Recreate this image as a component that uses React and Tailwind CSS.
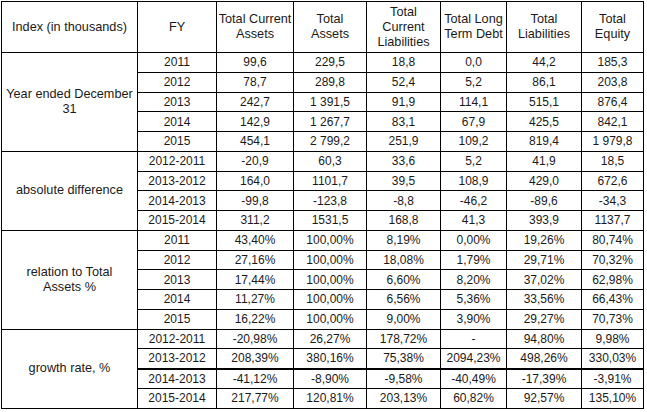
import React from "react";

const columns = [136, 79, 77, 73, 74, 66, 75, 62];

const sections = [
  {
    label: ["Year ended December", "31"],
    rows: [
      ["2011", "99,6", "229,5", "18,8", "0,0", "44,2", "185,3"],
      ["2012", "78,7", "289,8", "52,4", "5,2", "86,1", "203,8"],
      ["2013", "242,7", "1 391,5", "91,9", "114,1", "515,1", "876,4"],
      ["2014", "142,9", "1 267,7", "83,1", "67,9", "425,5", "842,1"],
      ["2015", "454,1", "2 799,2", "251,9", "109,2", "819,4", "1 979,8"],
    ],
  },
  {
    label: ["absolute difference"],
    rows: [
      ["2012-2011", "-20,9", "60,3", "33,6", "5,2", "41,9", "18,5"],
      ["2013-2012", "164,0", "1101,7", "39,5", "108,9", "429,0", "672,6"],
      ["2014-2013", "-99,8", "-123,8", "-8,8", "-46,2", "-89,6", "-34,3"],
      ["2015-2014", "311,2", "1531,5", "168,8", "41,3", "393,9", "1137,7"],
    ],
  },
  {
    label: ["relation to Total", "Assets %"],
    rows: [
      ["2011", "43,40%", "100,00%", "8,19%", "0,00%", "19,26%", "80,74%"],
      ["2012", "27,16%", "100,00%", "18,08%", "1,79%", "29,71%", "70,32%"],
      ["2013", "17,44%", "100,00%", "6,60%", "8,20%", "37,02%", "62,98%"],
      ["2014", "11,27%", "100,00%", "6,56%", "5,36%", "33,56%", "66,43%"],
      ["2015", "16,22%", "100,00%", "9,00%", "3,90%", "29,27%", "70,73%"],
    ],
  },
  {
    label: ["growth rate, %"],
    thickAfter: 1,
    rows: [
      ["2012-2011", "-20,98%", "26,27%", "178,72%", "-", "94,80%", "9,98%"],
      ["2013-2012", "208,39%", "380,16%", "75,38%", "2094,23%", "498,26%", "330,03%"],
      ["2014-2013", "-41,12%", "-8,90%", "-9,58%", "-40,49%", "-17,39%", "-3,91%"],
      ["2015-2014", "217,77%", "120,81%", "203,13%", "60,82%", "92,57%", "135,10%"],
    ],
  },
];

const headers = [
  ["Index (in thousands)"],
  ["FY"],
  ["Total Current", "Assets"],
  ["Total", "Assets"],
  ["Total", "Current", "Liabilities"],
  ["Total Long", "Term Debt"],
  ["Total", "Liabilities"],
  ["Total", "Equity"],
];

const Lines = ({ lines }) =>
  lines.map((l, i) => (
    <React.Fragment key={i}>
      {i > 0 && <br />}
      {l}
    </React.Fragment>
  ));

const App = () => {
  return (
    <div className="bg-white w-[647px] h-[412px] pl-px pt-px font-['Liberation_Sans',Arial,sans-serif] text-[12px] text-[#1a1a1a]">
      <table className="table-fixed border-collapse w-[643px]">
        <colgroup>
          {columns.map((w, i) => (
            <col key={i} style={{ width: w }} />
          ))}
        </colgroup>
        <thead>
          <tr className="h-[51px]">
            {headers.map((h, i) => (
              <th
                key={i}
                className="border border-black font-normal text-[12.7px] text-center align-middle leading-[15px] p-0 whitespace-nowrap"
              >
                <Lines lines={h} />
              </th>
            ))}
          </tr>
        </thead>
        <tbody>
          {sections.map((s, si) =>
            s.rows.map((r, ri) => (
              <tr key={si + "-" + ri} className="h-[19.75px]">
                {ri === 0 && (
                  <td
                    rowSpan={s.rows.length}
                    className="border border-black text-[12.7px] text-center align-middle leading-[15px] p-0 whitespace-nowrap"
                  >
                    <Lines lines={s.label} />
                  </td>
                )}
                {r.map((c, ci) => (
                  <td
                    key={ci}
                    className={
                      "border border-black text-center align-middle whitespace-nowrap leading-[14px] p-0 " +
                      (s.thickAfter === ri ? "border-b-2" : "")
                    }
                  >
                    {c}
                  </td>
                ))}
              </tr>
            ))
          )}
        </tbody>
      </table>
    </div>
  );
};

export default App;
